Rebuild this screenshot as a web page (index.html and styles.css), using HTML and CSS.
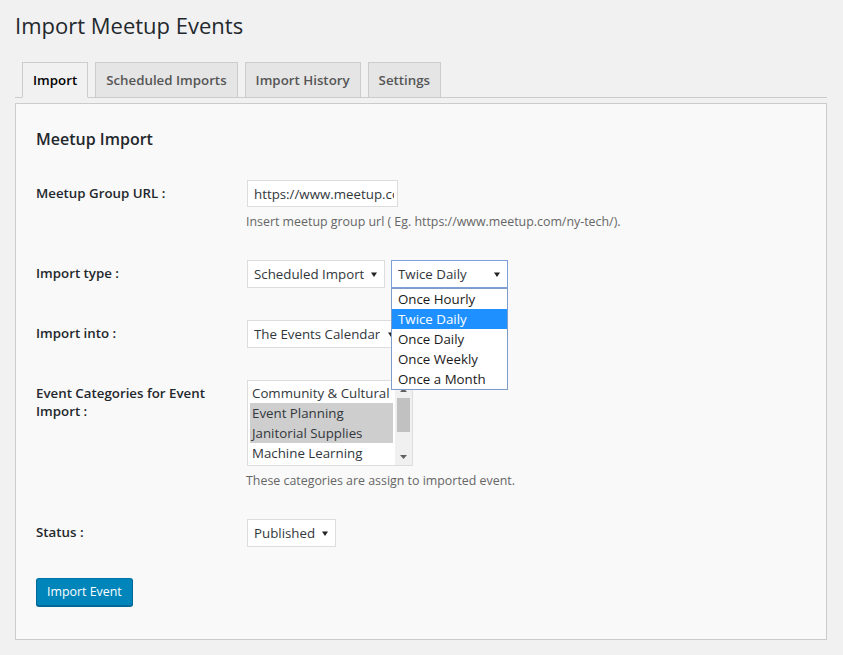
FILE: index.html
```html
<!DOCTYPE html>
<html lang="en">
<head>
<meta charset="utf-8">
<title>Import Meetup Events</title>
<link rel="stylesheet" href="styles.css">
</head>
<body>
<div class="wrap">
  <h1 class="page-title">Import Meetup Events</h1>
  <nav class="tabs">
    <a class="tab tab-active">Import</a>
    <a class="tab">Scheduled Imports</a>
    <a class="tab">Import History</a>
    <a class="tab">Settings</a>
  </nav>
  <div class="panel">
    <h2 class="panel-title">Meetup Import</h2>
    <div class="form">
      <div class="row">
        <div class="label">Meetup Group URL :</div>
        <div class="field">
          <input class="input" type="text" value="https://www.meetup.com/ny-tech/">
          <p class="desc">Insert meetup group url ( Eg. https://www.meetup.com/ny-tech/).</p>
        </div>
      </div>
      <div class="row">
        <div class="label">Import type :</div>
        <div class="field field-inline">
          <div class="select select-type"><span class="select-text">Scheduled Import</span><svg class="arrow" width="6" height="5" viewBox="0 0 6 5"><path d="M0 0.5H6L3 5Z"/></svg></div>
          <div class="select select-freq select-open"><span class="select-text">Twice Daily</span><svg class="arrow" width="6" height="5" viewBox="0 0 6 5"><path d="M0 0.5H6L3 5Z"/></svg>
            <ul class="dropdown">
              <li class="option">Once Hourly</li>
              <li class="option option-active">Twice Daily</li>
              <li class="option">Once Daily</li>
              <li class="option">Once Weekly</li>
              <li class="option">Once a Month</li>
            </ul>
          </div>
        </div>
      </div>
      <div class="row">
        <div class="label">Import into :</div>
        <div class="field">
          <div class="select select-into"><span class="select-text">The Events Calendar</span><svg class="arrow" width="6" height="5" viewBox="0 0 6 5"><path d="M0 0.5H6L3 5Z"/></svg></div>
        </div>
      </div>
      <div class="row">
        <div class="label">Event Categories for Event Import :</div>
        <div class="field">
          <div class="multi">
            <ul class="multi-list">
              <li class="multi-option">Community &amp; Cultural</li>
              <li class="multi-option multi-selected">Event Planning</li>
              <li class="multi-option multi-selected">Janitorial Supplies</li>
              <li class="multi-option">Machine Learning</li>
            </ul>
            <div class="scrollbar">
              <div class="sb-btn"><svg width="7" height="4" viewBox="0 0 7 4"><path d="M0 4H7L3.5 0Z"/></svg></div>
              <div class="sb-track"><div class="sb-thumb"></div></div>
              <div class="sb-btn"><svg width="7" height="4" viewBox="0 0 7 4"><path d="M0 0H7L3.5 4Z"/></svg></div>
            </div>
          </div>
          <p class="desc">These categories are assign to imported event.</p>
        </div>
      </div>
      <div class="row">
        <div class="label">Status :</div>
        <div class="field">
          <div class="select select-status"><span class="select-text">Published</span><svg class="arrow" width="6" height="5" viewBox="0 0 6 5"><path d="M0 0.5H6L3 5Z"/></svg></div>
        </div>
      </div>
    </div>
    <button class="btn" type="button">Import Event</button>
  </div>
</div>
</body>
</html>
```
FILE: styles.css
```css
* { box-sizing: border-box; }

body {
  margin: 0;
  background: #f1f1f1;
  font-family: "Open Sans", "Noto Sans", sans-serif;
  color: #444;
}

.wrap {
  padding: 0 16px 0 15px;
}

.page-title {
  margin: 0;
  padding-top: 10px;
  font-size: 22px;
  line-height: 30px;
  font-weight: 400;
  color: #23282d;
}

.tabs {
  display: flex;
  margin-top: 22px;
  border-bottom: 1px solid #ccc;
}

.tab {
  margin-left: 7px;
  margin-bottom: -1px;
  padding: 5px 10px;
  border: 1px solid #ccc;
  background: #e5e5e5;
  font-size: 13.3px;
  line-height: 24px;
  font-weight: 600;
  color: #555;
  white-space: nowrap;
}

.tab-active {
  background: #f1f1f1;
  border-bottom-color: #f1f1f1;
  color: #000;
}

.panel {
  margin-top: 5px;
  padding: 0 20px 33px;
  background: #f9f9f9;
  border: 1px solid #ccc;
}

.panel-title {
  margin: 24px 0 14px;
  font-size: 16px;
  line-height: 22px;
  font-weight: 600;
  color: #23282d;
}

.row {
  display: flex;
  padding: 16px 0;
}

.label {
  width: 200px;
  margin-right: 11px;
  padding-top: 4px;
  flex-shrink: 0;
  font-size: 13.3px;
  line-height: 18px;
  font-weight: 600;
  color: #23282d;
}

.field-inline {
  display: flex;
  gap: 6px;
}

.input {
  display: block;
  width: 151px;
  height: 27px;
  margin: 0;
  padding: 0 3px 0 6px;
  border: 1px solid #ddd;
  border-radius: 0;
  background: #fff;
  font-family: "Open Sans", "Noto Sans", sans-serif;
  font-size: 13.3px;
  color: #32373c;
  outline: none;
}

.desc {
  margin: 6px 0 -2px -1px;
  font-size: 12.4px;
  line-height: 17px;
  color: #666;
}

.select {
  position: relative;
  display: flex;
  align-items: center;
  height: 28px;
  padding: 0 7px 0 6px;
  border: 1px solid #ddd;
  background: #fff;
  font-size: 13.3px;
  color: #32373c;
}

.select-text {
  white-space: nowrap;
  overflow: hidden;
}

.arrow {
  margin-left: auto;
  flex-shrink: 0;
  fill: #222;
}

.select-type { width: 138px; }
.select-freq { width: 117px; }
.select-into { width: 155px; }
.select-status { width: 89px; }

.select-open {
  border-color: #7e9fd8;
}

.dropdown {
  position: absolute;
  top: calc(100% + 1px);
  left: -1px;
  right: -1px;
  z-index: 10;
  margin: 0;
  padding: 0;
  list-style: none;
  background: #fff;
  border: 1px solid #7f9cc9;
}

.option {
  height: 20px;
  padding-left: 6px;
  line-height: 20px;
  font-size: 13.3px;
  color: #1a1a1a;
  white-space: nowrap;
}

.option-active {
  background: #1e90ff;
  color: #fff;
}

.multi {
  display: flex;
  width: 166px;
  height: 86px;
  border: 1px solid #ddd;
  background: #fff;
}

.multi-list {
  flex: 1;
  min-width: 0;
  margin: 0;
  padding: 2px;
  list-style: none;
}

.multi-option {
  height: 20px;
  padding-left: 2px;
  line-height: 20px;
  font-size: 13.3px;
  color: #32373c;
  white-space: nowrap;
  overflow: hidden;
}

.multi-selected {
  background: #cecece;
}

.scrollbar {
  width: 17px;
  display: flex;
  flex-direction: column;
  background: #f0f0f0;
}

.sb-btn {
  height: 17px;
  display: flex;
  align-items: center;
  justify-content: center;
  fill: #606060;
}

.sb-track {
  flex: 1;
  padding: 0 2px;
}

.sb-thumb {
  height: 34px;
  background: #c1c1c1;
}

.btn {
  display: block;
  margin-top: 15px;
  height: 28px;
  padding: 0 10px;
  border: 1px solid;
  border-color: #0073aa #006799 #006799;
  border-radius: 3px;
  background: #0085ba;
  box-shadow: 0 1px 0 #006799;
  font-family: "Open Sans", "Noto Sans", sans-serif;
  font-size: 12.4px;
  line-height: 26px;
  color: #fff;
}
```
